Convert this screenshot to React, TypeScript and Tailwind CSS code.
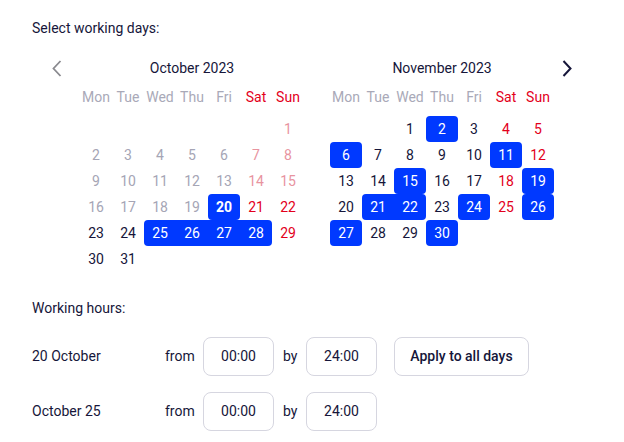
import React from "react";

const weekDays = ["Mon", "Tue", "Wed", "Thu", "Fri", "Sat", "Sun"];

type Month = {
  title: string;
  offset: number;
  days: number;
  selected: number[];
  disabledBefore: number;
  bold?: number;
};

const months: Month[] = [
  { title: "October 2023", offset: 6, days: 31, selected: [20, 25, 26, 27, 28], disabledBefore: 20, bold: 20 },
  { title: "November 2023", offset: 2, days: 30, selected: [2, 6, 11, 15, 19, 21, 22, 24, 26, 27, 30], disabledBefore: 0 },
];

const MonthGrid = ({ m }: { m: Month }) => {
  const cells: (number | null)[] = [];
  for (let i = 0; i < m.offset; i++) cells.push(null);
  for (let d = 1; d <= m.days; d++) cells.push(d);

  return (
    <div className="w-[224px]">
      <div className="h-[26px] flex items-center justify-center text-[14px] text-[#16163a]">{m.title}</div>
      <div className="mt-[3px] grid grid-cols-7 h-[26px] items-center">
        {weekDays.map((w, i) => (
          <span key={w} className={"text-center text-[14px] " + (i >= 5 ? "text-[#e3001b]" : "text-[#a9a9b8]")}>
            {w}
          </span>
        ))}
      </div>
      <div className="mt-[6px] grid grid-cols-7">
        {cells.map((d, idx) => {
          if (d === null) return <div key={"e" + idx} className="h-[26px]" />;
          const col = idx % 7;
          const weekend = col >= 5;
          const sel = m.selected.includes(d);
          const disabled = d < m.disabledBefore;
          let cls = "h-[26px] flex items-center justify-center text-[14px] ";
          if (sel) {
            cls += "bg-[#0039ff] text-white ";
            if (!(col > 0 && m.selected.includes(d - 1))) cls += "rounded-l-[4px] ";
            if (!(col < 6 && m.selected.includes(d + 1))) cls += "rounded-r-[4px] ";
          } else if (disabled) {
            cls += weekend ? "text-[#e8949f] " : "text-[#a5a5b5] ";
          } else {
            cls += weekend ? "text-[#e3001b] " : "text-[#16163a] ";
          }
          if (m.bold === d) cls += "font-bold ";
          return (
            <div key={d} className={cls}>
              {d}
            </div>
          );
        })}
      </div>
    </div>
  );
};

const TimeRow = ({ label, showApply }: { label: string; showApply?: boolean }) => (
  <div className="flex items-center h-[39px] text-[14px] text-[#16163a]">
    <span className="w-[133px]">{label}</span>
    <span className="w-[38px]">from</span>
    <div className="w-[71px] h-[39px] border border-[#d6d6e0] rounded-[8px] flex items-center justify-center">00:00</div>
    <span className="ml-[9px] w-[23px]">by</span>
    <div className="w-[71px] h-[39px] border border-[#d6d6e0] rounded-[8px] flex items-center justify-center">24:00</div>
    {showApply && (
      <button className="ml-[17px] w-[135px] h-[39px] border border-[#d6d6e0] rounded-[8px] font-medium text-[#16163a]">
        Apply to all days
      </button>
    )}
  </div>
);

export default function App() {
  return (
    <div className="w-[624px] h-[442px] bg-white pl-[32px] pt-[18px] font-['Roboto',sans-serif] overflow-hidden">
      <p className="text-[14px] leading-[20px] text-[#16163a]">Select working days:</p>
      <div className="mt-[17px] ml-[16px] flex items-start">
        <div className="w-[32px] h-[26px] flex items-center">
          <svg width="10" height="17" viewBox="0 0 10 17" className="ml-[4px]">
            <path d="M8.5 1 L1.5 8.5 L8.5 16" fill="none" stroke="#8a8a8f" strokeWidth="1.8" />
          </svg>
        </div>
        <MonthGrid m={months[0]} />
        <div className="w-[26px]" />
        <MonthGrid m={months[1]} />
        <div className="h-[26px] flex items-center pl-[8px]">
          <svg width="10" height="17" viewBox="0 0 10 17">
            <path d="M1.5 1 L8.5 8.5 L1.5 16" fill="none" stroke="#16163a" strokeWidth="2" />
          </svg>
        </div>
      </div>
      <p className="mt-[26px] text-[14px] leading-[20px] text-[#16163a]">Working hours:</p>
      <div className="mt-[19px] flex flex-col gap-[16px]">
        <TimeRow label="20 October" showApply />
        <TimeRow label="October 25" />
      </div>
    </div>
  );
}
